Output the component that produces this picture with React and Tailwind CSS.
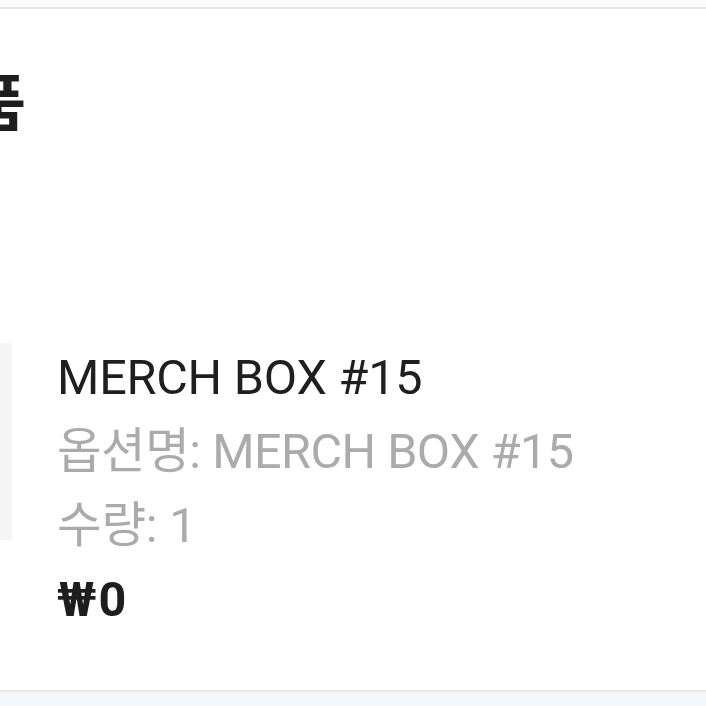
export default function App() {
  const font = { fontFamily: 'Roboto, "Noto Sans CJK KR", sans-serif' };
  return (
    <div className="w-[706px] h-[706px] overflow-hidden bg-[#f4f7f9] flex flex-col" style={font}>
      <div className="h-[7px] shrink-0 bg-[#fafafa]" />
      <div className="h-[2px] shrink-0 bg-[#e6e6e6]" />
      <div className="h-[683px] shrink-0 bg-white flex flex-col border-b-2 border-[#e6e8ea]">
        <div className="mt-[52px] ml-[-88px] text-[62px] leading-[76px] font-bold text-[#1e1e1e] whitespace-nowrap" style={{ fontFamily: '"Noto Sans CJK KR", sans-serif' }}>
          상품
        </div>
        <div className="mt-[204px] flex items-start gap-[45px]">
          <div className="ml-[-185px] w-[197px] h-[197px] shrink-0 bg-[#f5f5f5] mt-[2px]" />
          <div className="flex flex-col text-[48.5px] leading-[74px] tracking-[-0.2px]">
            <div className="text-[#1f1f1f]">MERCH BOX #15</div>
            <div className="text-[#ababab] tracking-[-0.5px]">옵션명: MERCH BOX #15</div>
            <div className="text-[#ababab]">수량: 1</div>
            <div className="text-[#1e1e1e] font-bold tracking-[2px]">₩0</div>
          </div>
        </div>
      </div>
    </div>
  );
}
